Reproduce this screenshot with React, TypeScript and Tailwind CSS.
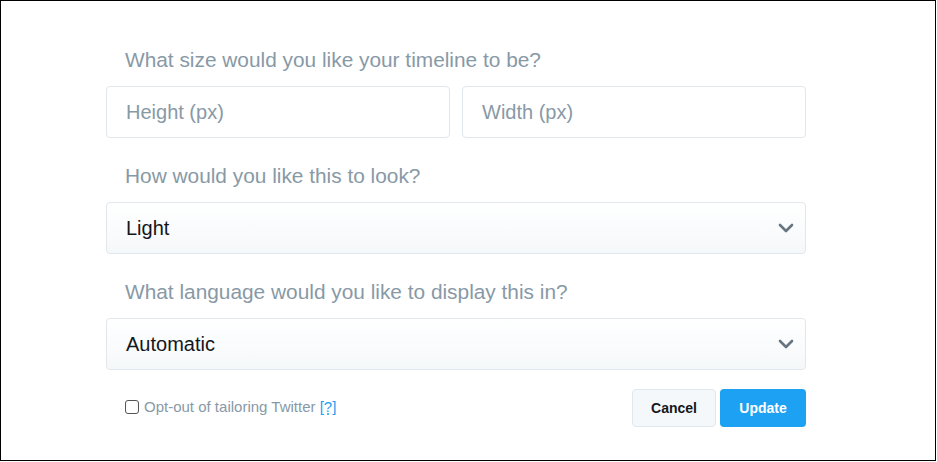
const labelCls = 'px-[19px] text-[20.85px] leading-[24px] text-[#8899a6]';
const fieldCls =
  'h-[52px] rounded-[4px] border border-[#e1e8ed] px-[19px] flex items-center text-[20px]';

function Select({ value }: { value: string }) {
  return (
    <div className={`${fieldCls} justify-between bg-gradient-to-b from-white to-[#f5f8fa] text-[#14171a]`}>
      <span>{value}</span>
      <svg width="16" height="10" viewBox="0 0 16 10" className="mr-[-8px]">
        <path d="M2 2 L8 8 L14 2" fill="none" stroke="#66757f" strokeWidth="2.6" strokeLinecap="round" strokeLinejoin="round" />
      </svg>
    </div>
  );
}

export default function App() {
  return (
    <div
      className="w-[936px] h-[461px] border border-black bg-white"
      style={{ fontFamily: '"Liberation Sans", Arial, sans-serif' }}
    >
      <div className="w-[700px] ml-[105px] pt-[47px] flex flex-col">
        <div className={labelCls}>What size would you like your timeline to be?</div>
        <div className="mt-[14px] flex gap-[12px]">
          <div className={`${fieldCls} flex-1 text-[#8899a6]`}>Height (px)</div>
          <div className={`${fieldCls} flex-1 text-[#8899a6]`}>Width (px)</div>
        </div>

        <div className={`${labelCls} mt-[26px]`}>How would you like this to look?</div>
        <div className="mt-[14px]">
          <Select value="Light" />
        </div>

        <div className={`${labelCls} mt-[26px]`}>What language would you like to display this in?</div>
        <div className="mt-[14px]">
          <Select value="Automatic" />
        </div>

        <div className="mt-[19px] flex items-center justify-between">
          <label className="pl-[19px] flex items-center gap-[5px] text-[15px] text-[#8899a6] -mt-[2px]">
            <span className="w-[14px] h-[14px] rounded-[3px] border border-[#555] bg-white inline-block" />
            <span>
              Opt-out of tailoring Twitter{' '}
              <span className="text-[#1da1f2] underline decoration-dotted underline-offset-2">[?]</span>
            </span>
          </label>
          <div className="flex gap-[4px]">
            <button className="h-[38px] w-[84px] rounded-[4px] border border-[#e1e8ed] bg-[#f5f8fa] text-[14px] font-bold text-[#14171a]">
              Cancel
            </button>
            <button className="h-[38px] w-[86px] rounded-[4px] bg-[#1da1f2] text-[14px] font-bold text-white">
              Update
            </button>
          </div>
        </div>
      </div>
    </div>
  );
}
